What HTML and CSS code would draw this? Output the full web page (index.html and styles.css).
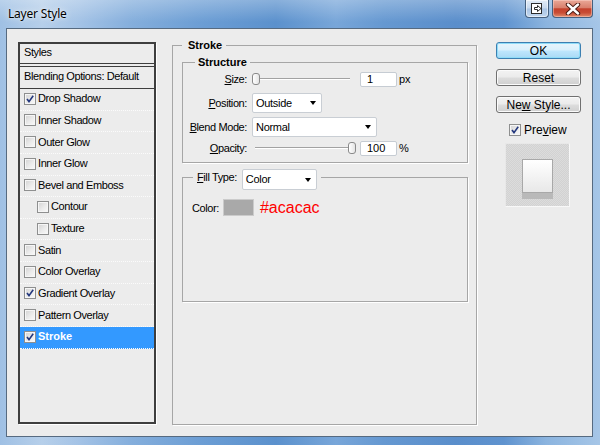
FILE: index.html
```html
<!DOCTYPE html>
<html>
<head>
<meta charset="utf-8">
<title>Layer Style</title>
<link rel="stylesheet" href="styles.css">
</head>
<body>
<div class="window">
  <div class="titlebar">
    <span class="title">Layer Style</span>
    <div class="caption-btns">
      <span class="cbtn help">
        <svg width="14" height="13" viewBox="0 0 14 13"><rect x="1.5" y="1.5" width="10" height="10" fill="#fff" stroke="#2b2b2b"/><path d="M4.5 5.5h3v-2l3.5 3-3.5 3v-2h-3z" fill="#fff" stroke="#2b2b2b" stroke-linejoin="round"/></svg>
      </span>
      <span class="cbtn close">
        <svg width="16" height="12" viewBox="0 0 16 12"><path d="M3 1.5l10 9M13 1.5l-10 9" stroke="#4a1a12" stroke-width="4.4" stroke-linecap="round"/><path d="M3 1.5l10 9M13 1.5l-10 9" stroke="#fff" stroke-width="2.4" stroke-linecap="round"/></svg>
      </span>
    </div>
  </div>
  <div class="client">
    <div class="list">
      <div class="lhead">Styles</div>
      <div class="lblend">Blending Options: Default</div>
      <div class="row"><span class="cb on"><svg width="10" height="10" viewBox="0 0 10 10"><path d="M2 5l2 2.6L8.2 1.8" fill="none" stroke="#23377d" stroke-width="1.6"/></svg></span>Drop Shadow</div>
      <div class="row"><span class="cb"></span>Inner Shadow</div>
      <div class="row"><span class="cb"></span>Outer Glow</div>
      <div class="row"><span class="cb"></span>Inner Glow</div>
      <div class="row"><span class="cb"></span>Bevel and Emboss</div>
      <div class="row sub"><span class="cb"></span>Contour</div>
      <div class="row sub"><span class="cb"></span>Texture</div>
      <div class="row"><span class="cb"></span>Satin</div>
      <div class="row"><span class="cb"></span>Color Overlay</div>
      <div class="row"><span class="cb on"><svg width="10" height="10" viewBox="0 0 10 10"><path d="M2 5l2 2.6L8.2 1.8" fill="none" stroke="#23377d" stroke-width="1.6"/></svg></span>Gradient Overlay</div>
      <div class="row"><span class="cb"></span>Pattern Overlay</div>
      <div class="row selected"><span class="cb on"><svg width="10" height="10" viewBox="0 0 10 10"><path d="M2 5l2 2.6L8.2 1.8" fill="none" stroke="#23377d" stroke-width="1.6"/></svg></span>Stroke</div>
    </div>

    <fieldset class="grp stroke">
      <legend class="lg-stroke">Stroke</legend>
      <fieldset class="grp structure">
        <legend class="lg-structure">Structure</legend>
        <div class="frow">
          <span class="flabel"><u>S</u>ize:</span>
          <span class="slider"><span class="thumb"></span></span>
          <span class="input">1</span>
          <span class="unit">px</span>
        </div>
        <div class="frow">
          <span class="flabel"><u>P</u>osition:</span>
          <span class="select sel-pos">Outside<i class="arrow"></i></span>
        </div>
        <div class="frow">
          <span class="flabel"><u>B</u>lend Mode:</span>
          <span class="select sel-blend">Normal<i class="arrow"></i></span>
        </div>
        <div class="frow last">
          <span class="flabel"><u>O</u>pacity:</span>
          <span class="slider end"><span class="thumb"></span></span>
          <span class="input">100</span>
          <span class="unit">%</span>
        </div>
      </fieldset>
      <fieldset class="grp fill">
        <legend class="lg-fill"><span class="filllabel"><u>F</u>ill Type:</span><span class="select sel-color">Color<i class="arrow"></i></span></legend>
        <div class="color-row">
          <span>Color:</span>
          <span class="swatch"></span>
          <span class="hex">#acacac</span>
        </div>
      </fieldset>
    </fieldset>

    <div class="side">
      <div class="btn ok"><span>OK</span></div>
      <div class="btn"><span>Reset</span></div>
      <div class="btn"><span>Ne<u>w</u> Style...</span></div>
      <div class="prev-row"><span class="cb on"><svg width="10" height="10" viewBox="0 0 10 10"><path d="M2 5l2 2.6L8.2 1.8" fill="none" stroke="#23377d" stroke-width="1.6"/></svg></span><span>Pre<u>v</u>iew</span></div>
      <div class="preview">
        <div class="pv-square"></div>
        <div class="pv-shadow"></div>
      </div>
    </div>
  </div>
</div>
</body>
</html>
```

FILE: styles.css
```css
* { box-sizing: border-box; }
html, body { margin: 0; padding: 0; }
body {
  width: 600px;
  height: 445px;
  overflow: hidden;
  font-family: "Liberation Sans", Arial, sans-serif;
  font-size: 11px;
  color: #000;
}
u { text-decoration: underline; }

.window {
  width: 600px;
  height: 445px;
  display: flex;
  flex-direction: column;
  background:
    linear-gradient(180deg, rgba(255,255,255,0.28) 0px, rgba(255,255,255,0) 22px),
    linear-gradient(90deg, #9fc0e4 0%, #b6cfea 7%, #a4c3e6 13%, #84aedc 22%, #6b9dd4 34%, #5b91cd 46%, #78a6d9 56%, #6598d1 64%, #5a8ecb 76%, #5f93cf 84%, #8bb4df 91%, #a6c6e7 100%);
}

.titlebar {
  height: 28px;
  flex: none;
  display: flex;
  justify-content: space-between;
  align-items: flex-start;
  padding: 0 7px 0 8px;
}
.title {
  font-family: "Noto Sans", "Open Sans", sans-serif;
  font-size: 12px;
  line-height: 16px;
  margin-top: 6px;
  letter-spacing: -0.2px;
  text-shadow: 0 0 6px rgba(255,255,255,0.9), 0 0 2px rgba(255,255,255,0.8);
}
.caption-btns { display: flex; gap: 3px; }
.cbtn {
  height: 18px;
  border: 1px solid #45607f;
  border-top: none;
  border-radius: 0 0 4px 4px;
  display: flex;
  align-items: center;
  justify-content: center;
}
.help {
  width: 24px;
  background: linear-gradient(#e2ecf7 0%, #c7d9ee 48%, #a9c4e4 52%, #c3d8ef 100%);
  box-shadow: inset 0 0 0 1px rgba(255,255,255,0.55);
}
.close {
  width: 41px;
  background: linear-gradient(#eaa897 0%, #d9806d 45%, #c4412c 52%, #c94d35 75%, #e08c6c 100%);
  box-shadow: inset 0 0 0 1px rgba(255,220,210,0.45);
}

.client {
  flex: 1;
  margin: 0 7px 8px 6px;
  border: 1px solid #566a80;
  background: #ececec;
  display: flex;
  align-items: flex-start;
}

/* Left list */
.list {
  margin: 13px 0 0 11px;
  width: 138px;
  height: 382px;
  border: 2px solid #3e3e3e;
  box-shadow: 1px 1px 0 #fff;
  flex: none;
}
.lhead {
  height: 20px;
  padding: 2px 4px 0;
  line-height: 13px;
  border-bottom: 1px solid #3e3e3e;
  margin-bottom: 2px;
  letter-spacing: -0.4px;
}
.lblend {
  height: 23px;
  padding: 3px 4px 0;
  line-height: 13px;
  border-top: 1px solid #3e3e3e;
  border-bottom: 1px solid #3e3e3e;
  letter-spacing: -0.4px;
  white-space: nowrap;
}
.row {
  height: 21.64px;
  display: flex;
  align-items: center;
  padding-bottom: 1px;
  border-bottom: 1px dotted #fbfbfb;
  line-height: 13px;
  letter-spacing: -0.4px;
  white-space: nowrap;
}
.row.selected {
  background: #3399ff;
  color: #fff;
  font-weight: bold;
  letter-spacing: 0;
}
.cb {
  width: 12px;
  height: 12px;
  flex: none;
  border: 1px solid #8e8f8f;
  background: linear-gradient(135deg, #d2d2d2 0%, #ebebeb 55%, #fafafa 100%);
  box-shadow: inset 0 0 0 1px #f6f6f6;
  margin: 0 2px 0 4px;
  display: flex;
  align-items: center;
  justify-content: center;
}
.row.sub .cb { margin-left: 17px; }

/* Group boxes */
fieldset.grp {
  margin: 0;
  border: 1px solid #a6a6a6;
  box-shadow: 1px 1px 0 #fff;
  min-width: 0;
}
.stroke {
  margin-left: 16px !important;
  margin-top: 10px !important;
  width: 305px;
  height: 386px;
  padding: 4px 8px 0 9px;
  flex: none;
}
.lg-stroke, .lg-structure {
  font-weight: bold;
  line-height: 13px;
}
.lg-stroke { padding: 0 4px 0 6px; }
.structure {
  width: 286px;
  padding: 0 0 7px 0;
}
.lg-structure { margin-left: 12px; padding: 0 3px; }

.frow {
  display: flex;
  align-items: center;
  height: 20px;
  margin-bottom: 4px;
}
.frow.last { height: 14px; margin-bottom: 0; }
.flabel {
  width: 64px;
  text-align: right;
  margin-right: 5px;
  letter-spacing: -0.4px;
  white-space: nowrap;
  line-height: 13px;
}
.slider {
  width: 104px;
  height: 12px;
  display: flex;
  align-items: flex-start;
  background:
    linear-gradient(#a2a2a2, #a2a2a2) no-repeat 3px 5px / 95px 1px,
    linear-gradient(#ffffff, #ffffff) no-repeat 3px 6px / 95px 1px;
}
.slider.end { justify-content: flex-end; }
.thumb {
  width: 8px;
  height: 12px;
  border: 1px solid #8a8a8a;
  border-radius: 3px;
  background: linear-gradient(90deg, #ffffff, #e4e4e4);
}
.input {
  margin-left: 4px;
  width: 37px;
  height: 15px;
  border: 1px solid #c6ccd3;
  border-radius: 2px;
  background: #fff;
  padding-left: 6px;
  line-height: 13px;
}
.unit { margin-left: 2px; line-height: 13px; }

.select {
  height: 20px;
  border: 1px solid #c9ced4;
  border-radius: 2px;
  background: #fff;
  display: flex;
  align-items: center;
  justify-content: space-between;
  padding: 0 5px 0 3px;
  line-height: 13px;
  letter-spacing: -0.3px;
}
.sel-pos { width: 70px; }
.sel-blend { width: 125px; }
.arrow {
  width: 0;
  height: 0;
  border-left: 3px solid transparent;
  border-right: 3px solid transparent;
  border-top: 4px solid #000;
}

.fill {
  margin-top: 6px !important;
  width: 286px;
  height: 133px;
  padding: 14px 0 0 9px;
}
.lg-fill {
  margin-left: 1px;
  padding: 0 4px;
  height: 16px;
  display: flex;
  align-items: flex-start;
}
.filllabel { line-height: 16px; letter-spacing: -0.4px; white-space: nowrap; }
.sel-color { width: 75px; height: 21px; margin-left: 5px; flex: none; }

.color-row {
  display: flex;
  align-items: center;
  height: 17px;
  letter-spacing: -0.4px;
}
.swatch {
  margin-left: 4px;
  width: 31px;
  height: 17px;
  border: 1px solid #cbcbcb;
  background: #a9a9a9;
}
.hex {
  margin-left: 6px;
  font-size: 16px;
  color: #ff0000;
  letter-spacing: 0;
}

/* Right side */
.side {
  margin: 13px 0 0 19px;
  width: 85px;
  flex: none;
}
.btn {
  width: 85px;
  height: 17px;
  border: 1px solid #707070;
  border-radius: 3px;
  font-size: 12px;
  line-height: 14px;
  display: flex;
  align-items: center;
  justify-content: center;
  background: linear-gradient(#f3f3f3 0%, #ebebeb 48%, #dddddd 52%, #cfcfcf 100%);
  box-shadow: inset 0 0 0 1px #fbfbfb;
  margin-bottom: 10px;
  white-space: nowrap;
}
.btn.ok {
  border-color: #3c7fb1;
  background: linear-gradient(#e8f5fc 0%, #d9f0fc 48%, #bee6fd 52%, #a9daf5 100%);
  box-shadow: inset 0 0 0 1px #8fdcf8;
}
.prev-row {
  margin-top: -2px;
  height: 18px;
  display: flex;
  align-items: center;
  font-size: 12px;
}
.prev-row .cb { margin: 0 3px 0 13px; }
.preview {
  margin: 4px 0 0 9px;
  width: 65px;
  height: 64px;
  border: 1px solid #e8e8e8;
  border-right-color: #f8f8f8;
  border-bottom-color: #f8f8f8;
  background: repeating-conic-gradient(#d2d2d2 0 25%, #dcdcdc 0 50%) 0 0 / 2px 2px;
  padding: 15px 0 0 16px;
}
.pv-square {
  width: 31px;
  height: 34px;
  border: 1px solid #a8a8a8;
  background: linear-gradient(#ffffff, #e8e8e8);
}
.pv-shadow {
  width: 31px;
  height: 6px;
  background: #b9b9b9;
}
```
